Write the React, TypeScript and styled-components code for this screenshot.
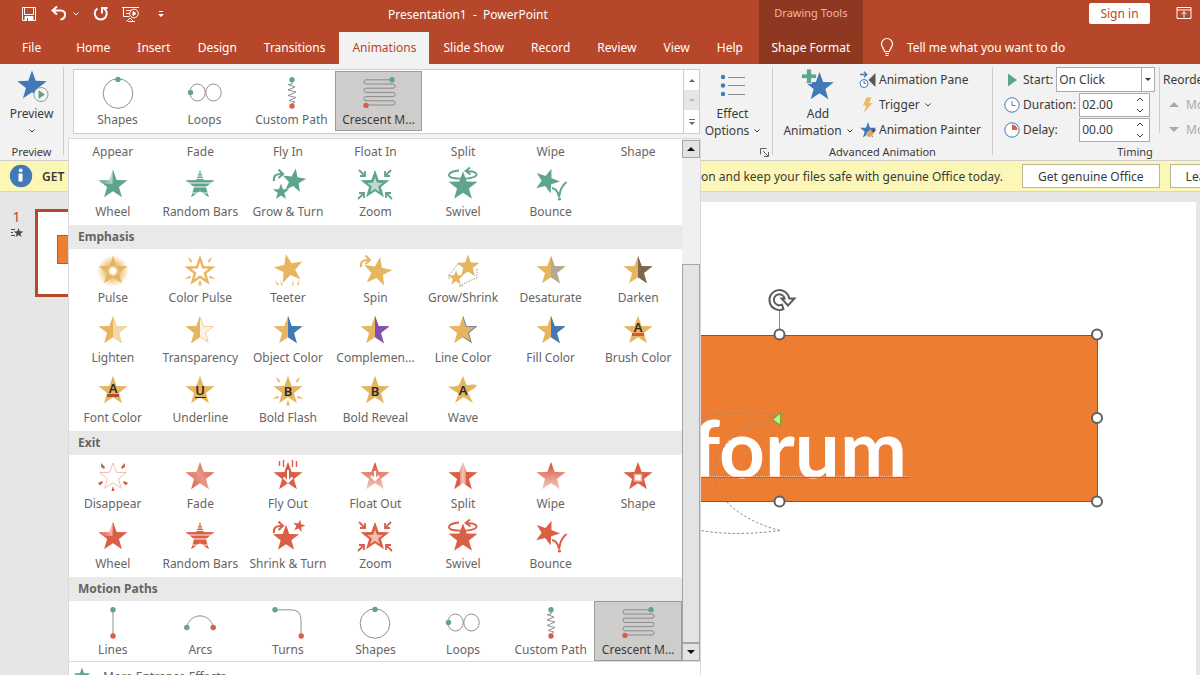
import React from 'react'
import styled, { createGlobalStyle, css } from 'styled-components'

const COLORS = {
    brand: '#b7472a',
    brandDark: '#8f3821',
    ribbon: '#f2f2f2',
    line: '#cfcdcb',
    text: '#3b3a39',
    muted: '#666564',
    green: '#5fa58c',
    gold: '#e7b560',
    red: '#da5f45',
    blue: '#4179b8',
    stroke: '#8f8f8f',
}

type Effect = { name: string; kind: string; color?: string; selected?: boolean }
type Section = { title: string; color: string; items: Effect[] }

const sections: Section[] = [
    {
        title: 'Entrance',
        color: COLORS.green,
        items: [
            { name: 'Appear', kind: 'plain' },
            { name: 'Fade', kind: 'fade' },
            { name: 'Fly In', kind: 'flyOut' },
            { name: 'Float In', kind: 'floatOut' },
            { name: 'Split', kind: 'split' },
            { name: 'Wipe', kind: 'wipe' },
            { name: 'Shape', kind: 'shape' },
            { name: 'Wheel', kind: 'wheel' },
            { name: 'Random Bars', kind: 'bars' },
            { name: 'Grow & Turn', kind: 'growTurn' },
            { name: 'Zoom', kind: 'zoom' },
            { name: 'Swivel', kind: 'swivel' },
            { name: 'Bounce', kind: 'bounce' },
        ],
    },
    {
        title: 'Emphasis',
        color: COLORS.gold,
        items: [
            { name: 'Pulse', kind: 'pulse' },
            { name: 'Color Pulse', kind: 'colorPulse' },
            { name: 'Teeter', kind: 'teeter' },
            { name: 'Spin', kind: 'spin' },
            { name: 'Grow/Shrink', kind: 'growShrink' },
            { name: 'Desaturate', kind: 'half', color: '#b4a994' },
            { name: 'Darken', kind: 'half', color: '#7b6850' },
            { name: 'Lighten', kind: 'half', color: '#f3d7a4' },
            { name: 'Transparency', kind: 'transparency' },
            { name: 'Object Color', kind: 'half', color: COLORS.blue },
            { name: 'Complemen...', kind: 'half', color: '#8350b0' },
            { name: 'Line Color', kind: 'lineColor' },
            { name: 'Fill Color', kind: 'half', color: COLORS.blue },
            { name: 'Brush Color', kind: 'brush' },
            { name: 'Font Color', kind: 'fontColor' },
            { name: 'Underline', kind: 'underline' },
            { name: 'Bold Flash', kind: 'boldFlash' },
            { name: 'Bold Reveal', kind: 'boldReveal' },
            { name: 'Wave', kind: 'wave' },
        ],
    },
    {
        title: 'Exit',
        color: COLORS.red,
        items: [
            { name: 'Disappear', kind: 'disappear' },
            { name: 'Fade', kind: 'fade' },
            { name: 'Fly Out', kind: 'flyOut' },
            { name: 'Float Out', kind: 'floatOut' },
            { name: 'Split', kind: 'split' },
            { name: 'Wipe', kind: 'wipe' },
            { name: 'Shape', kind: 'shape' },
            { name: 'Wheel', kind: 'wheel' },
            { name: 'Random Bars', kind: 'bars' },
            { name: 'Shrink & Turn', kind: 'shrinkTurn' },
            { name: 'Zoom', kind: 'zoom' },
            { name: 'Swivel', kind: 'swivel' },
            { name: 'Bounce', kind: 'bounce' },
        ],
    },
    {
        title: 'Motion Paths',
        color: COLORS.stroke,
        items: [
            { name: 'Lines', kind: 'lines' },
            { name: 'Arcs', kind: 'arcs' },
            { name: 'Turns', kind: 'turns' },
            { name: 'Shapes', kind: 'shapes' },
            { name: 'Loops', kind: 'loops' },
            { name: 'Custom Path', kind: 'custom' },
            { name: 'Crescent M...', kind: 'crescent', selected: true },
        ],
    },
]

const tabs = [
    'File',
    'Home',
    'Insert',
    'Design',
    'Transitions',
    'Animations',
    'Slide Show',
    'Record',
    'Review',
    'View',
    'Help',
]

const starPoints = (cx: number, cy: number, r: number, turn = 0) =>
    Array.from({ length: 10 }, (_, i) => {
        const radius = i % 2 ? r * 0.41 : r
        const a = ((i * 36 + turn - 90) * Math.PI) / 180
        return `${(cx + radius * Math.cos(a)).toFixed(2)},${(cy + radius * Math.sin(a)).toFixed(2)}`
    }).join(' ')

const STAR = starPoints(16, 16, 15.2)

const Rays = ({ color }: { color: string }) => (
    <g fill={color}>
        <path d="M3.500 1.500l5 4.500-2 1.500zM28.500 1.500l-5 4.500 2 1.500zM.500 24l5.500-3.500 1 2.500zM31.500 24l-5.500-3.500-1 2.500zM16 24.500l1.800 6h-3.600z" />
    </g>
)

const TurnArrow = ({ color }: { color: string }) => (
    <g fill="none" stroke={color} strokeWidth="2">
        <path d="M2 12C1 6.500 4.500 4.500 10 5" />
        <path d="M6.500.5l4.500 4.500-4.500 4" />
    </g>
)

const Letter = ({ children, y = 21 }: { children: string; y?: number }) => (
    <text
        x="16"
        y={y}
        textAnchor="middle"
        fontSize="13"
        fontWeight="600"
        fontFamily='"Noto Sans", sans-serif'
        fill="#2b2a28"
    >
        {children}
    </text>
)

const Ball = ({ x, y, color }: { x: number; y: number; color: string }) => (
    <circle cx={x} cy={y} r="2.7" fill={color} />
)

const EffectIcon = ({ kind, color, second }: { kind: string; color: string; second?: string }) => {
    const id = React.useId()
    const star = <polygon points={STAR} fill={color} />
    const gradient = (
        <linearGradient id={id} x1="0" y1="0" x2="0" y2="1">
            <stop offset="0.15" stopColor={color} />
            <stop offset="1" stopColor={color} stopOpacity="0.3" />
        </linearGradient>
    )

    switch (kind) {
        case 'fade':
            return (
                <>
                    <linearGradient id={id} x1="1" y1="0.2" x2="0" y2="0.8">
                        <stop offset="0" stopColor={color} />
                        <stop offset="0.5" stopColor={color} stopOpacity="0.65" />
                        <stop offset="1" stopColor={color} />
                    </linearGradient>
                    <polygon points={STAR} fill={`url(#${id})`} />
                </>
            )
        case 'wipe':
            return (
                <>
                    {gradient}
                    <polygon points={STAR} fill={`url(#${id})`} />
                </>
            )
        case 'flyOut':
            return (
                <>
                    {star}
                    <path
                        d="M7.500 0v5M11.500-1v7M20.500-1v7M24.500 0v6"
                        stroke={color}
                        strokeWidth="1.4"
                    />
                    <path
                        d="M16 9v12M11.500 16.500l4.500 4.500 4.500-4.500"
                        fill="none"
                        stroke="#fff"
                        strokeWidth="2"
                    />
                </>
            )
        case 'floatOut':
            return (
                <>
                    {gradient}
                    <polygon points={STAR} fill={`url(#${id})`} />
                    <path
                        d="M16 10v9M12 15l4 4 4-4"
                        fill="none"
                        stroke="#fff"
                        strokeWidth="2"
                    />
                </>
            )
        case 'split':
            return (
                <>
                    <linearGradient id={id}>
                        <stop offset="0.38" stopColor={color} />
                        <stop offset="0.39" stopColor={color} stopOpacity="0.7" />
                        <stop offset="0.5" stopColor={color} stopOpacity="0.35" />
                        <stop offset="0.61" stopColor={color} stopOpacity="0.7" />
                        <stop offset="0.62" stopColor={color} />
                    </linearGradient>
                    <polygon points={STAR} fill={`url(#${id})`} />
                </>
            )
        case 'shape':
            return (
                <>
                    {star}
                    <rect
                        x="12.500"
                        y="13.500"
                        width="7"
                        height="6.500"
                        fill="#fff"
                        stroke="#f0b3a6"
                        strokeWidth="1.500"
                    />
                </>
            )
        case 'wheel':
            return (
                <>
                    <clipPath id={`${id}c`}>
                        <polygon points={STAR} />
                    </clipPath>
                    <linearGradient id={id} x1="0" y1="1" x2="1" y2="0.3">
                        <stop offset="0.2" stopColor="#fff" stopOpacity="0" />
                        <stop offset="1" stopColor="#fff" stopOpacity="0.8" />
                    </linearGradient>
                    {star}
                    <rect
                        width="15.500"
                        height="15"
                        fill={`url(#${id})`}
                        clipPath={`url(#${id}c)`}
                    />
                </>
            )
        case 'bars':
            return (
                <>
                    {star}
                    <path
                        d="M0 4h32M0 7h32M0 9.500h32M0 14h32M0 18h32M0 24h32"
                        stroke="#fff"
                        strokeWidth="0.900"
                    />
                </>
            )
        case 'growTurn':
            return (
                <g fill={color}>
                    <polygon points={starPoints(22, 12, 12.5, 8)} />
                    <polygon points={starPoints(9, 23, 8.5)} />
                    <TurnArrow color={color} />
                </g>
            )
        case 'shrinkTurn':
            return (
                <g fill={color}>
                    <polygon points={starPoints(14, 17.5, 13.8)} />
                    <polygon points={starPoints(27, 5, 6.5, 12)} />
                    <TurnArrow color={color} />
                </g>
            )
        case 'zoom':
            return (
                <>
                    {star}
                    <polygon points={starPoints(16, 16.5, 8)} fill="#fff" fillOpacity="0.6" />
                    <path
                        d="M0 1l6 6M6 2v5H1M32 1l-6 6M26 2v5h5M-1 30l6-6M0 24h5v5M33 30l-6-6M32 24h-5v5"
                        fill="none"
                        stroke={color}
                        strokeWidth="1.8"
                    />
                </>
            )
        case 'swivel':
            return (
                <>
                    <polygon points={starPoints(16, 17.5, 15.2)} fill={color} />
                    <path
                        d="M12 1.500C1 2.500-1 7.500 6 9c6.500 1.300 18 .8 22-1.500 4.500-3-1-5.500-8.500-5.500M23-1.500L18.500 2l5 3.500"
                        fill="none"
                        stroke={color}
                        strokeWidth="1.8"
                    />
                </>
            )
        case 'bounce':
            return (
                <>
                    <polygon points={starPoints(12, 12, 13, 20)} fill={color} />
                    <path
                        d="M17 19c4 .5 6 4 7 9C25 21 27 16.500 31.500 13"
                        fill="none"
                        stroke={color}
                        strokeWidth="2"
                    />
                    <circle cx="24.500" cy="30" r="1.6" fill={color} />
                </>
            )
        case 'pulse':
            return (
                <>
                    <radialGradient id={id}>
                        <stop offset="0.5" stopColor={color} stopOpacity="0.75" />
                        <stop offset="1" stopColor={color} stopOpacity="0" />
                    </radialGradient>
                    <radialGradient id={`${id}w`}>
                        <stop offset="0.45" stopColor="#fff" />
                        <stop offset="1" stopColor="#fff" stopOpacity="0" />
                    </radialGradient>
                    <circle cx="16" cy="16" r="16" fill={`url(#${id})`} />
                    {star}
                    <circle cx="16" cy="16" r="5.5" fill={`url(#${id}w)`} />
                </>
            )
        case 'colorPulse':
            return (
                <>
                    <polygon
                        points={starPoints(16, 16.5, 12.8)}
                        fill="#fff"
                        stroke={color}
                        strokeWidth="2.4"
                    />
                    <Rays color={color} />
                </>
            )
        case 'disappear':
            return (
                <>
                    <polygon
                        points={starPoints(16, 16, 14)}
                        fill="#fff"
                        stroke="#f0b8ac"
                        strokeWidth="0.9"
                    />
                    <path
                        d="M4 2l4 4-1 2-3-2zM28 2l-4 4 1 2 3-2zM1 22l4-2 1 1.500-3 3zM31 22l-4-2-1 1.500 3 3zM16 25l1.600 5h-3.200z"
                        fill="#c9614c"
                    />
                </>
            )
        case 'teeter':
            return (
                <g fill={color}>
                    <polygon points={starPoints(17, 14, 15.2, -12)} />
                    <path d="M3 25l4 4.500-1.500 1zM8 25.500l3 4.500-1.500.8zM27.500 24l-2.500 5.500 1.500.8zM22 25.500l-2.500 4.500 1.500.8z" />
                </g>
            )
        case 'spin':
            return (
                <g fill={color}>
                    <polygon points={starPoints(18.5, 17, 15, 10)} />
                    <TurnArrow color={color} />
                </g>
            )
        case 'growShrink':
            return (
                <>
                    <path
                        d="M2 20L11 9M12 31l18-8.500V14M2 20v4M12 31h4M11 9h4"
                        fill="none"
                        stroke="#9b958c"
                        strokeWidth="1"
                        strokeDasharray="1.5 1.2"
                    />
                    <polygon points={starPoints(21, 11.5, 12)} fill={color} />
                    <polygon points={starPoints(9, 23, 8)} fill={color} />
                </>
            )
        case 'half':
        case 'transparency':
            return (
                <>
                    <clipPath id={id}>
                        <rect x="16" width="16" height="32" />
                    </clipPath>
                    {kind === 'half' ? (
                        <>
                            {star}
                            <polygon points={STAR} fill={second} clipPath={`url(#${id})`} />
                        </>
                    ) : (
                        <>
                            <polygon
                                points={starPoints(16, 16, 14)}
                                fill="#fdf3e4"
                                stroke="#efcf9c"
                            />
                            <clipPath id={`${id}l`}>
                                <rect width="16" height="32" />
                            </clipPath>
                            <polygon points={STAR} fill={color} clipPath={`url(#${id}l)`} />
                        </>
                    )}
                </>
            )
        case 'lineColor':
            return (
                <>
                    <clipPath id={id}>
                        <rect x="16" width="16" height="32" />
                    </clipPath>
                    {star}
                    <polygon points={STAR} fill="#6f86a0" clipPath={`url(#${id})`} />
                    <polygon
                        points={starPoints(16, 16, 12.5)}
                        fill={color}
                        clipPath={`url(#${id})`}
                    />
                </>
            )
        case 'brush':
            return (
                <>
                    {star}
                    <Letter y={17}>A</Letter>
                    <rect x="10" y="18" width="12" height="3" fill="#d8593a" />
                </>
            )
        case 'fontColor':
            return (
                <>
                    {star}
                    <rect x="10" y="19" width="12" height="3" fill="#b4502c" />
                    <Letter y={18}>A</Letter>
                </>
            )
        case 'underline':
            return (
                <>
                    {star}
                    <Letter y={20}>U</Letter>
                    <path d="M11 22.500h11" stroke="#2b2a28" />
                </>
            )
        case 'boldFlash':
            return (
                <>
                    {star}
                    <Rays color={color} />
                    <Letter>B</Letter>
                </>
            )
        case 'boldReveal':
            return (
                <>
                    {star}
                    <Letter>B</Letter>
                </>
            )
        case 'wave':
            return (
                <>
                    <path
                        d="M16 1l3.500 9c4 .5 6-1.500 10.500 0-1.500 3.500-6 5-9 7.500L26 28l-9.500-6L8 28l3.500-9.500C8 16 4 14.500 1 11c4 1.500 8 .500 11-1z"
                        fill={color}
                    />
                    <Letter y={20}>A</Letter>
                </>
            )
        case 'lines':
            return (
                <>
                    <path d="M16 3v26" stroke={COLORS.stroke} />
                    <Ball x={16} y={2.8} color={COLORS.green} />
                    <Ball x={16} y={29} color={COLORS.red} />
                </>
            )
        case 'arcs':
            return (
                <>
                    <path
                        d="M2.500 20.500C6 5 26 5 29.500 20.500"
                        fill="none"
                        stroke={COLORS.stroke}
                    />
                    <Ball x={2.8} y={20.5} color={COLORS.green} />
                    <Ball x={29.2} y={20.5} color={COLORS.red} />
                </>
            )
        case 'turns':
            return (
                <>
                    <path
                        d="M3 2.800h16q10 0 10 10V29"
                        fill="none"
                        stroke={COLORS.stroke}
                    />
                    <Ball x={3} y={2.8} color={COLORS.green} />
                    <Ball x={29.2} y={29} color={COLORS.red} />
                </>
            )
        case 'shapes':
            return (
                <>
                    <circle cx="16" cy="16.5" r="14.8" fill="none" stroke={COLORS.stroke} />
                    <Ball x={16} y={2.4} color={COLORS.green} />
                </>
            )
        case 'loops':
            return (
                <>
                    <g fill="none" stroke={COLORS.stroke}>
                        <ellipse cx="8.5" cy="15.5" rx="7.7" ry="8.5" />
                        <ellipse cx="24.5" cy="15.5" rx="7.7" ry="8.5" />
                    </g>
                    <Ball x={1.5} y={15.5} color={COLORS.green} />
                </>
            )
        case 'custom':
            return (
                <>
                    <path
                        d="M16 3v4l-4 .5 7 2.500-7 3 8 2-8 3.500 8 2-7 3 6 1.500-3 2V29"
                        fill="none"
                        stroke={COLORS.stroke}
                    />
                    <Ball x={16} y={2.8} color={COLORS.green} />
                    <Ball x={16} y={29} color={COLORS.red} />
                </>
            )
        case 'crescent':
            return (
                <>
                    <path
                        d="M30 2.800H3a2.100 2.100 0 0 0 0 4.200h27a2.100 2.100 0 0 1 0 4.200H3a2.100 2.100 0 0 0 0 4.200h27a2.100 2.100 0 0 1 0 4.200H3a2.100 2.100 0 0 0 0 4.200h27a2.100 2.100 0 0 1 0 4.200H3"
                        fill="none"
                        stroke="#8a8a8a"
                    />
                    <Ball x={29} y={2.8} color={COLORS.green} />
                    <Ball x={3} y={28.4} color={COLORS.red} />
                </>
            )
        default:
            return star
    }
}

const EffectCell: React.FC<{ effect: Effect; color: string }> = ({ effect, color }) => (
    <Cell type="button" $selected={effect.selected}>
        <svg width="32" height="32" viewBox="0 0 32 32" overflow="visible" aria-hidden>
            <EffectIcon kind={effect.kind} color={color} second={effect.color} />
        </svg>
        <CellLabel>{effect.name}</CellLabel>
    </Cell>
)

const Caret = () => (
    <svg width="6" height="4" viewBox="0 0 6 4" fill="none" stroke="currentColor" aria-hidden>
        <path d="M.5.5L3 3 5.500.5" />
    </svg>
)

const Triangle = ({ up, size = 6 }: { up?: boolean; size?: number }) => (
    <svg width={size} height={size / 2} viewBox="0 0 6 3" fill="currentColor" aria-hidden>
        <path d={up ? 'M0 3L3 0l3 3z' : 'M0 0h6L3 3z'} />
    </svg>
)

const Header = () => (
    <HeaderBar>
        <HeaderMain>
            <TitleRow>
                <QuickAccess>
                    <PlainButton aria-label="Save">
                        <svg width="18" height="18" viewBox="0 0 18 18" fill="none" stroke="#fff">
                            <path d="M2.500 2.500h13v13h-13zM4.500 2.500v7h9v-7" />
                            <path d="M5 11.500h8v4H5z" fill="#fff" />
                            <path d="M7.500 13v3" stroke={COLORS.brand} />
                        </svg>
                    </PlainButton>
                    <UndoGroup>
                        <PlainButton aria-label="Undo">
                            <svg
                                width="18"
                                height="18"
                                viewBox="0 0 18 18"
                                fill="none"
                                stroke="#fff"
                                strokeWidth="2"
                            >
                                <path d="M7 1.500L2.500 5.500 7 9.500M3 5.500h8c5.500 0 5.500 8-.5 9" />
                            </svg>
                        </PlainButton>
                        <PlainButton aria-label="Undo list">
                            <Caret />
                        </PlainButton>
                    </UndoGroup>
                    <PlainButton aria-label="Repeat">
                        <svg
                            width="18"
                            height="18"
                            viewBox="0 0 18 18"
                            fill="none"
                            stroke="#fff"
                            strokeWidth="2"
                        >
                            <path d="M5.500 3.500A6 6 0 1 0 12 3.500M10 8.500V3h5.500" />
                        </svg>
                    </PlainButton>
                    <PlainButton aria-label="Start from beginning">
                        <svg width="18" height="18" viewBox="0 0 18 18" fill="none" stroke="#fff">
                            <path d="M0 2.500h17M1.500 2.500v9h6M4 5.500h5M4 8.500h3M4.500 16.500L8 13l3.500 3.500M6 16.500h7" />
                            <circle cx="12" cy="8.500" r="4.300" />
                            <path d="M11 6.500v4l3-2z" fill="#fff" />
                        </svg>
                    </PlainButton>
                    <CustomizeButton aria-label="Customize toolbar">
                        <svg width="6" height="6" viewBox="0 0 6 6" fill="#fff">
                            <path d="M1 0h4v1H1zM0 3h6L3 6z" />
                        </svg>
                    </CustomizeButton>
                </QuickAccess>
                <WindowTitle>Presentation1&nbsp; -&nbsp; PowerPoint</WindowTitle>
            </TitleRow>
            <TabRow>
                {tabs.map((tab) => (
                    <Tab key={tab} type="button" $active={tab === 'Animations'}>
                        {tab}
                    </Tab>
                ))}
            </TabRow>
        </HeaderMain>
        <ContextGroup>
            <ContextTitle>Drawing Tools</ContextTitle>
            <ContextTab type="button">Shape Format</ContextTab>
        </ContextGroup>
        <HeaderSide>
            <AccountRow>
                <SignIn type="button">Sign in</SignIn>
                <PlainButton aria-label="Ribbon display options">
                    <svg width="16" height="14" viewBox="0 0 16 14" fill="none" stroke="#fff">
                        <path d="M1 1.500h14v11H1zM1 4h14M8 11.500V6M5.500 8.200L8 5.700l2.500 2.500" />
                    </svg>
                </PlainButton>
            </AccountRow>
            <TellMe type="button">
                <svg width="20" height="20" viewBox="0 0 20 20" fill="none" stroke="#fff">
                    <path
                        d="M7.500 14.500c0-2.500-3-4-3-7.500a5.500 5.500 0 0 1 11 0c0 3.500-3 5-3 7.500zM8 16.500h4M8.500 18.500h3"
                        strokeWidth="1.200"
                    />
                </svg>
                Tell me what you want to do
            </TellMe>
        </HeaderSide>
    </HeaderBar>
)

const Ribbon = () => (
    <RibbonBar>
        <Group $width={63}>
            <GroupBody>
                <BigButton type="button">
                    <svg width="36" height="36" viewBox="0 0 36 36">
                        <polygon points={starPoints(18, 17, 15.5)} fill={COLORS.blue} />
                        <circle cx="27" cy="25.500" r="7" fill="#f7f7f7" stroke="#8f9a96" />
                        <path d="M24.500 21v9l6.500-4.500z" fill={COLORS.green} />
                    </svg>
                    <span>Preview</span>
                    <BigLine>
                        <Caret />
                    </BigLine>
                </BigButton>
            </GroupBody>
            <GroupLabel>Preview</GroupLabel>
        </Group>
        <Separator />
        <Group $width={708}>
            <GroupBody>
                <Gallery>
                    <GalleryItems>
                        {sections[3].items.slice(3).map((effect) => (
                            <EffectCell key={effect.name} effect={effect} color={COLORS.stroke} />
                        ))}
                    </GalleryItems>
                    <GalleryScroll>
                        <ScrollStep type="button" aria-label="Row up">
                            <Triangle up />
                        </ScrollStep>
                        <ScrollStep type="button" aria-label="Row down" disabled>
                            <Triangle />
                        </ScrollStep>
                        <ScrollStep type="button" aria-label="More">
                            <svg width="6" height="6" viewBox="0 0 6 6" fill="currentColor">
                                <path d="M0 0h6v1H0zM0 3h6L3 6z" />
                            </svg>
                        </ScrollStep>
                    </GalleryScroll>
                </Gallery>
                <BigButton type="button">
                    <svg width="36" height="36" viewBox="0 0 36 36">
                        <g fill={COLORS.blue}>
                            <circle cx="8" cy="8" r="2.200" />
                            <circle cx="8" cy="16.500" r="2.200" />
                            <circle cx="8" cy="25" r="2.200" />
                        </g>
                        <path d="M13 8.500h17M13 16.500h17M13 25.500h17" stroke="#8a8a8a" />
                    </svg>
                    <span>Effect</span>
                    <BigLine>
                        Options <Caret />
                    </BigLine>
                </BigButton>
            </GroupBody>
            <LauncherRow>
                <PlainButton aria-label="Animation settings">
                    <svg width="9" height="9" viewBox="0 0 9 9" fill="none" stroke="#5f5e5d">
                        <path d="M.5 6.500v-6h6M3 3l5 5M8.500 4v4.500H4" />
                    </svg>
                </PlainButton>
            </LauncherRow>
        </Group>
        <Separator />
        <Group $width={219}>
            <GroupBody>
                <AddButton type="button">
                    <svg width="36" height="36" viewBox="0 0 36 36">
                        <polygon points={starPoints(19.5, 18, 15)} fill={COLORS.blue} />
                        <path
                            d="M6.500 0h5v5h5v4.500h-5v5h-5v-5h-5V5h5z"
                            fill={COLORS.green}
                            stroke={COLORS.ribbon}
                            strokeWidth="0.800"
                        />
                    </svg>
                    <span>Add</span>
                    <BigLine>
                        Animation <Caret />
                    </BigLine>
                </AddButton>
                <Stack>
                    <SmallButton type="button">
                        <svg width="18" height="18" viewBox="0 0 18 18">
                            <path
                                d="M1 3.500h6M5 .8l2.800 2.700L5 6.200"
                                fill="none"
                                stroke={COLORS.blue}
                                strokeWidth="1.300"
                            />
                            <circle
                                cx="5"
                                cy="12.500"
                                r="4"
                                fill="#fff"
                                stroke={COLORS.blue}
                            />
                            <path d="M5 10v2.500h2" fill="none" stroke="#777" />
                            <path d="M16.500 2v14L9.500 9z" fill="#595857" />
                        </svg>
                        <span>Animation Pane</span>
                    </SmallButton>
                    <SmallButton type="button">
                        <svg width="18" height="18" viewBox="0 0 18 18">
                            <path d="M7.500 1.500h5L10 7h3.500L5 16.500l2-7H4z" fill="#e9b963" />
                        </svg>
                        <span>Trigger&nbsp;</span>
                        <Caret />
                    </SmallButton>
                    <SmallButton type="button">
                        <svg width="18" height="18" viewBox="0 0 18 18">
                            <polygon points={starPoints(9, 9.5, 8.5)} fill={COLORS.blue} />
                            <path
                                d="M8 12l4-3 3 3.500-3.500 3.500c-1.500.5-3 0-4-1z"
                                fill="#e0a65a"
                                stroke={COLORS.ribbon}
                                strokeWidth="0.600"
                            />
                            <path d="M12 10l3-3 2 2-2.500 3z" fill="#595857" />
                        </svg>
                        <span>Animation Painter</span>
                    </SmallButton>
                </Stack>
            </GroupBody>
            <GroupLabel>Advanced Animation</GroupLabel>
        </Group>
        <Separator />
        <Group $width={284}>
            <GroupBody>
                <Fields>
                    <Field>
                        <svg width="16" height="16" viewBox="0 0 16 16">
                            <path d="M4 1.500v13L13 8z" fill={COLORS.green} />
                        </svg>
                        <label htmlFor="start">Start:</label>
                        <SelectBox>
                            <select id="start" defaultValue="On Click">
                                <option>On Click</option>
                            </select>
                            <SelectArrow>
                                <Triangle />
                            </SelectArrow>
                        </SelectBox>
                    </Field>
                    <Field>
                        <svg width="16" height="16" viewBox="0 0 16 16">
                            <circle cx="8" cy="8" r="7.2" fill="#fff" stroke={COLORS.blue} />
                            <path d="M8 4v4.500h3.500" fill="none" stroke="#777" />
                        </svg>
                        <label htmlFor="duration">Duration:</label>
                        <Spin id="duration" value="02.00" />
                    </Field>
                    <Field>
                        <svg width="16" height="16" viewBox="0 0 16 16">
                            <circle cx="8" cy="8" r="7.2" fill="#fff" stroke={COLORS.blue} />
                            <path d="M8 8V2.500A5.500 5.500 0 0 1 13.500 8z" fill={COLORS.red} />
                        </svg>
                        <label htmlFor="delay">Delay:</label>
                        <Spin id="delay" value="00.00" />
                    </Field>
                </Fields>
                <FieldsSeparator />
                <Stack>
                    <ReorderTitle>Reorder Animation</ReorderTitle>
                    <MoveButton type="button" disabled>
                        <Triangle up size={10} />
                        Move Earlier
                    </MoveButton>
                    <MoveButton type="button" disabled>
                        <Triangle size={10} />
                        Move Later
                    </MoveButton>
                </Stack>
            </GroupBody>
            <GroupLabel>Timing</GroupLabel>
        </Group>
    </RibbonBar>
)

const Spin: React.FC<{ id: string; value: string }> = ({ id, value }) => (
    <SpinBox>
        <input id={id} type="text" defaultValue={value} />
        <SpinButtons>
            <PlainButton aria-label={`Increase ${id}`}>
                <svg width="8" height="5" viewBox="0 0 8 5" fill="none" stroke="currentColor">
                    <path d="M1 4l3-3 3 3" />
                </svg>
            </PlainButton>
            <PlainButton aria-label={`Decrease ${id}`}>
                <svg width="8" height="5" viewBox="0 0 8 5" fill="none" stroke="currentColor">
                    <path d="M1 1l3 3 3-3" />
                </svg>
            </PlainButton>
        </SpinButtons>
    </SpinBox>
)

const Notice = () => (
    <NoticeBar>
        <NoticeStart>
            <svg width="24" height="24" viewBox="0 0 24 24">
                <circle cx="12" cy="12" r="11.2" fill={COLORS.blue} />
                <path d="M9.500 9.500h4v8h-4z" fill="#fff" />
                <circle cx="11.700" cy="6.300" r="1.900" fill="#fff" />
            </svg>
            <strong>GET</strong>
        </NoticeStart>
        <NoticeText>on and keep your files safe with genuine Office today.</NoticeText>
        <NoticeButton type="button">Get genuine Office</NoticeButton>
        <NoticeButton type="button">Learn more</NoticeButton>
    </NoticeBar>
)

const EffectsMenu = () => (
    <Menu>
        <MenuScroller>
            <MenuList>
                {sections.map((section) => (
                    <React.Fragment key={section.title}>
                        <MenuHeading>{section.title}</MenuHeading>
                        <MenuGrid>
                            {section.items.map((effect) => (
                                <EffectCell
                                    key={effect.name}
                                    effect={effect}
                                    color={section.color}
                                />
                            ))}
                        </MenuGrid>
                    </React.Fragment>
                ))}
            </MenuList>
            <ScrollBar>
                <ScrollArrow type="button" aria-label="Scroll up">
                    <Triangle up size={8} />
                </ScrollArrow>
                <ScrollTrack />
                <ScrollThumb />
                <ScrollArrow type="button" aria-label="Scroll down">
                    <Triangle size={8} />
                </ScrollArrow>
            </ScrollBar>
        </MenuScroller>
        <MoreButton type="button">
            <svg width="18" height="18" viewBox="0 0 32 32">
                <polygon points={STAR} fill={COLORS.green} />
            </svg>
            More Entrance Effects...
        </MoreButton>
    </Menu>
)

const Workspace = () => (
    <Work>
        <Thumbs>
            <ThumbInfo>
                1
                <svg width="12" height="10" viewBox="0 0 12 10" fill="#4a4a4a">
                    <polygon points={starPoints(7.5, 5, 5)} />
                    <path d="M0 1h4v1H0zM0 4h2v1H0zM0 7h4v1H0z" />
                </svg>
            </ThumbInfo>
            <Thumb>
                <ThumbShape />
            </Thumb>
        </Thumbs>
        <Slide>
            <ShapeBox>
                <ShapeText>forum</ShapeText>
            </ShapeBox>
            <PathLayer width="640" height="256" viewBox="460 285 640 256" fill="none">
                <g stroke="#948b84" strokeDasharray="2.500 2">
                    <path d="M780 415C755 422 714 440 714 474c0 26 32 48 66 56.500" />
                    <path d="M780 415C700 405 640 430 640 474c0 50 60 67 140 56.500" />
                </g>
                <path
                    d="M780.500 412.500v13l-8-6z"
                    fill="#c9ec8a"
                    stroke="#6fae2c"
                    strokeWidth="1.200"
                />
                <path d="M700 477.500h208" stroke="#f0482f" />
                <path d="M700 476.500h208" stroke="#ffc2a6" strokeDasharray="1 1" />
                <path d="M779.500 311v18" stroke="#8a8a8a" />
                <path
                    d="M783.500 309.200A10 10 0 1 1 789.300 298.500H794.500L788 305.500 781.500 298.500h3.200A5.500 5.500 0 1 0 782 304.600Z"
                    stroke="#5a5a5a"
                    strokeWidth="1.900"
                />
                <g fill="#fff" stroke="#5f5f5f" strokeWidth="2">
                    <circle cx="779.500" cy="334.500" r="5" />
                    <circle cx="1097" cy="334.500" r="5" />
                    <circle cx="1097" cy="418" r="5" />
                    <circle cx="779.500" cy="501.500" r="5" />
                    <circle cx="1097" cy="501.500" r="5" />
                </g>
            </PathLayer>
        </Slide>
    </Work>
)

const App: React.FC = () => {
    return (
        <Page>
            <GlobalStyle />
            <Header />
            <Ribbon />
            <Notice />
            <Workspace />
            <EffectsMenu />
        </Page>
    )
}

export default App

const GlobalStyle = createGlobalStyle`
    *, *::before, *::after {
        box-sizing: border-box;
    }
    body {
        margin: 0;
        overflow: hidden;
        font-family: 'Noto Sans', 'Open Sans', sans-serif;
        font-size: 12px;
        color: ${COLORS.text};
    }
    button, input, select {
        font: inherit;
        color: inherit;
    }
    svg {
        flex: none;
        display: block;
    }
`
const resetButton = css`
    padding: 0;
    border: 0;
    background: none;
    cursor: pointer;
    white-space: nowrap;
`
const Page = styled.div`
    position: relative;
    display: flex;
    flex-direction: column;
    height: 100vh;
    overflow: hidden;
    background-color: #e6e6e6;
`
const PlainButton = styled.button.attrs({ type: 'button' })`
    ${resetButton}
    display: flex;
    align-items: center;
`
const HeaderBar = styled.header`
    display: flex;
    flex: none;
    color: #fff;
    background-color: ${COLORS.brand};
`
const HeaderMain = styled.div`
    flex: none;
`
const TitleRow = styled.div`
    display: flex;
    align-items: center;
    height: 32px;
    padding-bottom: 4px;
`
const QuickAccess = styled.div`
    display: flex;
    align-items: center;
    gap: 12px;
    width: 177px;
    padding-left: 20px;
`
const UndoGroup = styled.div`
    display: flex;
    gap: 5px;
    width: 30px;
`
const CustomizeButton = styled(PlainButton)`
    justify-content: center;
    width: 18px;
`
const WindowTitle = styled.div`
    flex: 1;
    text-align: center;
`
const TabRow = styled.nav`
    display: flex;
    gap: 1px;
    height: 32px;
    padding: 0 3px 0 9px;
`
const Tab = styled.button<{ $active?: boolean }>`
    ${resetButton}
    padding: 0 13px 2px;
    color: ${({ $active }) => ($active ? COLORS.brand : '#fff')};
    background-color: ${({ $active }) => ($active ? COLORS.ribbon : 'transparent')};
    &:first-child {
        margin-right: 8px;
    }
`
const ContextGroup = styled.div`
    display: flex;
    flex-direction: column;
    flex: none;
    width: 104px;
    text-align: center;
    background-color: ${COLORS.brandDark};
`
const ContextTitle = styled.div`
    height: 32px;
    line-height: 26px;
    font-size: 11px;
    color: #efb5a3;
`
const ContextTab = styled.button`
    ${resetButton}
    height: 32px;
    padding-bottom: 2px;
`
const HeaderSide = styled.div`
    display: flex;
    flex-direction: column;
    flex: 1;
`
const AccountRow = styled.div`
    display: flex;
    align-items: center;
    justify-content: flex-end;
    gap: 26px;
    height: 32px;
    padding: 0 8px 6px 0;
`
const SignIn = styled.button`
    ${resetButton}
    width: 61px;
    height: 21px;
    border-radius: 2px;
    color: ${COLORS.brand};
    background-color: #fff;
`
const TellMe = styled.button`
    ${resetButton}
    display: flex;
    align-items: center;
    gap: 10px;
    height: 32px;
    padding: 0 0 2px 14px;
`
const RibbonBar = styled.div`
    display: flex;
    flex: none;
    height: 97px;
    padding-top: 3px;
    border-bottom: 1px solid ${COLORS.line};
    background-color: ${COLORS.ribbon};
`
const Group = styled.section<{ $width: number }>`
    display: flex;
    flex-direction: column;
    flex: 0 0 ${({ $width }) => $width}px;
    min-width: 0;
`
const GroupBody = styled.div`
    display: flex;
    flex: 1;
`
const GroupLabel = styled.div`
    height: 16px;
    font-size: 11px;
    line-height: 16px;
    text-align: center;
`
const LauncherRow = styled.div`
    display: flex;
    justify-content: flex-end;
    align-items: center;
    height: 16px;
    padding-right: 3px;
`
const Separator = styled.div`
    flex: none;
    width: 1px;
    height: 88px;
    background-color: ${COLORS.line};
`
const BigButton = styled.button`
    ${resetButton}
    display: flex;
    flex-direction: column;
    align-items: center;
    width: 65px;
    padding-top: 2px;
    line-height: 17px;
`
const AddButton = styled(BigButton)`
    width: 76px;
    margin-left: 7px;
`
const BigLine = styled.span`
    display: flex;
    align-items: center;
    gap: 5px;
    height: 17px;
`
const Gallery = styled.div`
    display: flex;
    flex: 0 0 627px;
    height: 65px;
    margin: 2px 0 0 9px;
    border: 1px solid ${COLORS.line};
    background-color: #fff;
`
const GalleryItems = styled.div`
    display: grid;
    flex: 1;
    grid-template-columns: repeat(auto-fill, 87px);
    padding: 1px 0;
`
const GalleryScroll = styled.div`
    display: grid;
    width: 16px;
    border-left: 1px solid ${COLORS.line};
`
const ScrollStep = styled.button`
    ${resetButton}
    display: flex;
    align-items: center;
    justify-content: center;
    color: #6a6a6a;
    &:disabled {
        color: #b8b8b8;
        background-color: #e6e6e6;
    }
`
const Cell = styled.button<{ $selected?: boolean }>`
    ${resetButton}
    display: flex;
    flex-direction: column;
    align-items: center;
    height: 60px;
    padding-top: 5px;
    border: 1px solid ${({ $selected }) => ($selected ? '#9c9b9a' : 'transparent')};
    color: ${({ $selected }) => ($selected ? COLORS.text : COLORS.muted)};
    background-color: ${({ $selected }) => ($selected ? '#cfcdcb' : 'transparent')};
`
const CellLabel = styled.span`
    line-height: 22px;
`
const Stack = styled.div`
    display: flex;
    flex-direction: column;
    padding-left: 3px;
`
const SmallButton = styled.button`
    ${resetButton}
    display: flex;
    align-items: center;
    gap: 2px;
    height: 25px;
`
const Fields = styled.div`
    display: grid;
    grid-auto-rows: 25px;
    width: 162px;
    padding-left: 11px;
`
const Field = styled.div`
    display: flex;
    align-items: center;
    gap: 3px;
`
const SelectBox = styled.div`
    display: flex;
    width: 99px;
    height: 25px;
    margin-left: auto;
    border: 1px solid #ababab;
    background-color: #fff;
    select {
        flex: 1;
        min-width: 0;
        padding: 0 2px;
        border: 0;
        appearance: none;
        background: none;
    }
`
const SelectArrow = styled.span`
    display: flex;
    align-items: center;
    justify-content: center;
    width: 13px;
    border-left: 1px solid #ababab;
    pointer-events: none;
`
const SpinBox = styled.div`
    display: flex;
    width: 71px;
    height: 24px;
    margin: 0 5px 0 auto;
    border: 1px solid #ababab;
    background-color: #fff;
    input {
        flex: 1;
        min-width: 0;
        padding: 0 2px;
        border: 0;
        background: none;
    }
`
const SpinButtons = styled.div`
    display: flex;
    flex-direction: column;
    justify-content: space-around;
    width: 13px;
`
const FieldsSeparator = styled.div`
    width: 1px;
    height: 66px;
    margin-left: 4px;
    background-color: ${COLORS.line};
`
const ReorderTitle = styled.div`
    line-height: 25px;
    white-space: nowrap;
`
const MoveButton = styled(SmallButton)`
    gap: 7px;
    padding-left: 6px;
    color: #a9a9a9;
`
const NoticeBar = styled.div`
    display: flex;
    align-items: center;
    flex: none;
    height: 31px;
    border-bottom: 1px solid #dcdab0;
    background-color: #fcf7b6;
`
const NoticeStart = styled.div`
    display: flex;
    align-items: center;
    flex: 0 0 701px;
    gap: 9px;
    padding-left: 9px;
    strong {
        font-weight: 600;
    }
`
const NoticeText = styled.div`
    flex: 0 0 321px;
    white-space: nowrap;
`
const NoticeButton = styled.button`
    ${resetButton}
    flex: none;
    height: 24px;
    margin-right: 10px;
    padding: 0 15px;
    border: 1px solid #b9b7a0;
    background-color: #fff;
`
const Work = styled.main`
    display: flex;
    flex: 1;
    min-height: 0;
`
const Thumbs = styled.aside`
    display: flex;
    flex: 0 0 220px;
    gap: 12px;
    padding: 17px 0 0 10px;
`
const ThumbInfo = styled.div`
    display: flex;
    flex-direction: column;
    align-items: center;
    gap: 3px;
    width: 13px;
    font-size: 14px;
    line-height: 16px;
    color: ${COLORS.brand};
`
const Thumb = styled.div`
    width: 160px;
    height: 88px;
    padding: 23px 19px;
    border: 3px solid ${COLORS.brand};
    background-color: #fff;
`
const ThumbShape = styled.div`
    height: 29px;
    border: 1px solid #b55f25;
    background-color: #ed7d31;
`
const Slide = styled.section`
    position: relative;
    flex: 1;
    margin: 10px 4px 0 80px;
    background-color: #fff;
`
const ShapeBox = styled.div`
    position: absolute;
    top: 133px;
    right: 98px;
    display: flex;
    align-items: flex-end;
    justify-content: flex-end;
    width: 636px;
    height: 167px;
    padding: 0 190px 6px 0;
    border: 1px solid #6e5b4d;
    background-color: #ed7d31;
`
const ShapeText = styled.div`
    font-family: Lato, 'Noto Sans', sans-serif;
    font-size: 80px;
    font-weight: 700;
    line-height: 96px;
    color: #fff;
`
const PathLayer = styled.svg`
    position: absolute;
    top: 83px;
    right: 96px;
    overflow: visible;
`
const Menu = styled.div`
    position: absolute;
    top: 138px;
    left: 68px;
    display: flex;
    flex-direction: column;
    width: 633px;
    border: 1px solid #dadada;
    background-color: #fff;
`
const MenuScroller = styled.div`
    display: flex;
    height: 523px;
    border-bottom: 1px solid #dadada;
`
const MenuList = styled.div`
    display: flex;
    flex: 1;
    flex-direction: column;
    justify-content: flex-end;
    overflow: hidden;
`
const MenuHeading = styled.h2`
    flex: none;
    margin: 0;
    padding-left: 9px;
    font-size: 12px;
    line-height: 24px;
    color: ${COLORS.muted};
    background-color: #e9e9e9;
`
const MenuGrid = styled.div`
    display: grid;
    flex: none;
    grid-template-columns: repeat(7, 1fr);
    padding-bottom: 2px;
    &:last-child {
        padding-bottom: 0;
    }
`
const ScrollBar = styled.div`
    display: flex;
    flex-direction: column;
    width: 18px;
    padding-top: 1px;
    background-color: #f0f0f0;
`
const ScrollArrow = styled.button`
    ${resetButton}
    display: flex;
    align-items: center;
    justify-content: center;
    flex: none;
    height: 18px;
    border: 1px solid #a5a5a5;
    color: #111;
    background-color: #e3e3e3;
`
const ScrollTrack = styled.div`
    height: 106px;
`
const ScrollThumb = styled.div`
    flex: 1;
    border: 1px solid #a5a5a5;
    background-color: #e3e3e3;
`
const MoreButton = styled.button`
    ${resetButton}
    display: flex;
    align-items: center;
    gap: 12px;
    height: 28px;
    padding-left: 4px;
    color: ${COLORS.muted};
`
